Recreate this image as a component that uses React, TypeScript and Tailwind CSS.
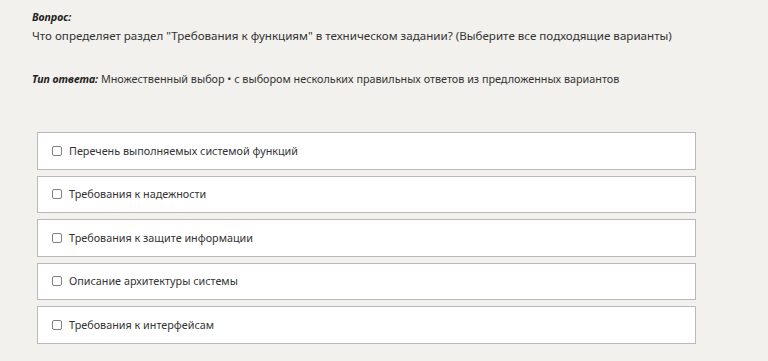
const OPTIONS = [
  'Перечень выполняемых системой функций',
  'Требования к надежности',
  'Требования к защите информации',
  'Описание архитектуры системы',
  'Требования к интерфейсам',
];

export default function App() {
  return (
    <div
      className="min-h-[361px] w-[768px] bg-[#f2f1ee] pl-[32px] pt-[9px] text-[#333]"
      style={{ fontFamily: '"Noto Sans", "Open Sans", sans-serif' }}
    >
      <div className="text-[10.6px] font-bold italic leading-[17px] text-[#222]">Вопрос:</div>
      <div className="text-[11.6px] leading-[19px]">
        Что определяет раздел "Требования к функциям" в техническом задании? (Выберите все подходящие варианты)
      </div>

      <div className="mt-[25px] text-[10.8px] leading-[18px]">
        <span className="text-[10.6px] font-bold italic text-[#222]">Тип ответа:</span> Множественный выбор • с
        выбором нескольких правильных ответов из предложенных вариантов
      </div>

      <div className="mt-[44px] ml-[5px] flex w-[659px] flex-col gap-[6px]">
        {OPTIONS.map(opt => (
          <label
            key={opt}
            className="flex h-[37.5px] items-center gap-[7px] border border-[#b9b9b9] bg-white pl-[14px] text-[10.8px]"
          >
            <span className="h-[10px] w-[10px] rounded-[2px] border border-[#808080] bg-white" />
            <span>{opt}</span>
          </label>
        ))}
      </div>
    </div>
  );
}
